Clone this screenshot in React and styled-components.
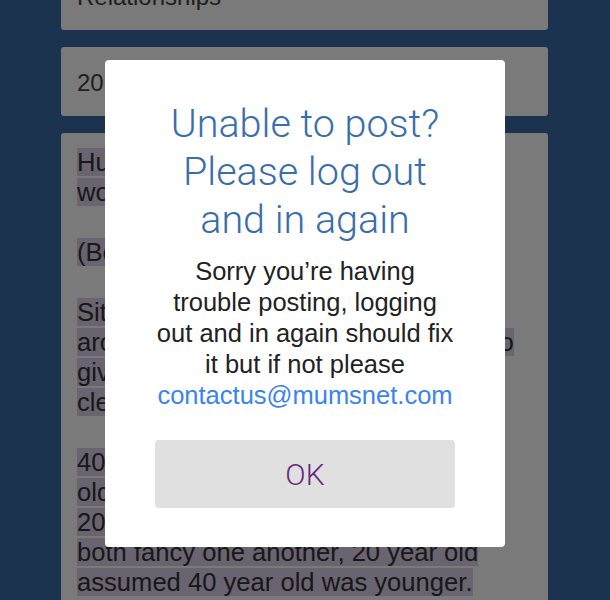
import React from 'react';
import styled, { createGlobalStyle } from 'styled-components';

const Global = createGlobalStyle`
  html, body { margin: 0; padding: 0; }
  body {
    width: 610px;
    height: 600px;
    overflow: hidden;
    background: #3a6ca3;
    font-family: "Liberation Sans", Arial, sans-serif;
  }
`;

const Page = styled.div`
  height: 600px;
  overflow: hidden;
  background: #3a6ca3;
  padding: 0 62px 0 61px;
`;

const Stack = styled.div`
  display: flex;
  flex-direction: column;
  gap: 17px;
  margin-top: -39px;
`;

const Field = styled.div`
  box-sizing: border-box;
  background: #fff;
  border-radius: 3px;
  height: 69px;
  display: flex;
  align-items: center;
  padding: 2px 16px 0;
  font-size: 24px;
  color: #444;
`;

const Body = styled.div`
  background: #fff;
  border-radius: 3px;
  padding: 14px 16px 30px;
  font-size: 25.6px;
  line-height: 30px;
  color: #333;
  min-height: 520px;
`;

const Para = styled.p`
  margin: 0 0 30px;
`;

const Mark = styled.span`
  background: #ddd0ea;
`;

const Backdrop = styled.div`
  position: fixed;
  inset: 0;
  background: rgba(0, 0, 0, 0.52);
  display: flex;
  justify-content: center;
  align-items: flex-start;
  padding-top: 60px;
`;

const Modal = styled.div`
  width: 400px;
  background: #fff;
  border-radius: 4px;
  padding: 40px 30px 39px;
  box-sizing: border-box;
  display: flex;
  flex-direction: column;
  align-items: center;
  text-align: center;
`;

const Title = styled.h2`
  margin: 0;
  font-family: Roboto, "Liberation Sans", sans-serif;
  font-weight: 300;
  font-size: 39.5px;
  line-height: 48px;
  color: #3a6eab;
`;

const Message = styled.p`
  margin: 12px 0 0;
  font-family: "Liberation Sans", Arial, sans-serif;
  font-weight: 400;
  font-size: 25.5px;
  line-height: 31px;
  color: #222;
  white-space: nowrap;
`;

const Email = styled.a`
  color: #3b84ee;
  text-decoration: none;
`;

const OkButton = styled.button`
  margin-top: 29px;
  width: 300px;
  height: 68px;
  border: 0;
  border-radius: 4px;
  background: #e0e0e0;
  font-family: Roboto, "Liberation Sans", sans-serif;
  font-weight: 300;
  font-size: 30px;
  color: #6b2a7e;
  cursor: pointer;
`;

const App = () => {
  return (
    <>
      <Global />
      <Page>
        <Stack>
          <Field>Relationships</Field>
          <Field>20 year old and 40 year old</Field>
          <Body>
            <Para>
              <Mark>Husband and I disagree on this, what</Mark><br />
              <Mark>would you think?</Mark>
            </Para>
            <Para>
              <Mark>(Bored and curious)</Mark>
            </Para>
            <Para>
              <Mark>Situation is a hypothetical one but</Mark><br />
              <Mark>around a couple we know, not going to</Mark><br />
              <Mark>give away too many personal details,</Mark><br />
              <Mark>clearly it isn't us though.</Mark>
            </Para>
            <Para>
              <Mark>40 year old and 20 year old, one was</Mark><br />
              <Mark>old enough to know better, the</Mark><br />
              <Mark>20 year old had just left home. They</Mark><br />
              <Mark>both fancy one another, 20 year old</Mark><br />
              <Mark>assumed 40 year old was younger.</Mark>
            </Para>
          </Body>
        </Stack>
      </Page>
      <Backdrop>
        <Modal>
          <Title>Unable to post?<br />Please log out<br />and in again</Title>
          <Message>
            Sorry you’re having<br />
            trouble posting, logging<br />
            out and in again should fix<br />
            it but if not please<br />
            <Email href="mailto:contactus@mumsnet.com">contactus@mumsnet.com</Email>
          </Message>
          <OkButton>OK</OkButton>
        </Modal>
      </Backdrop>
    </>
  );
};

export default App;
